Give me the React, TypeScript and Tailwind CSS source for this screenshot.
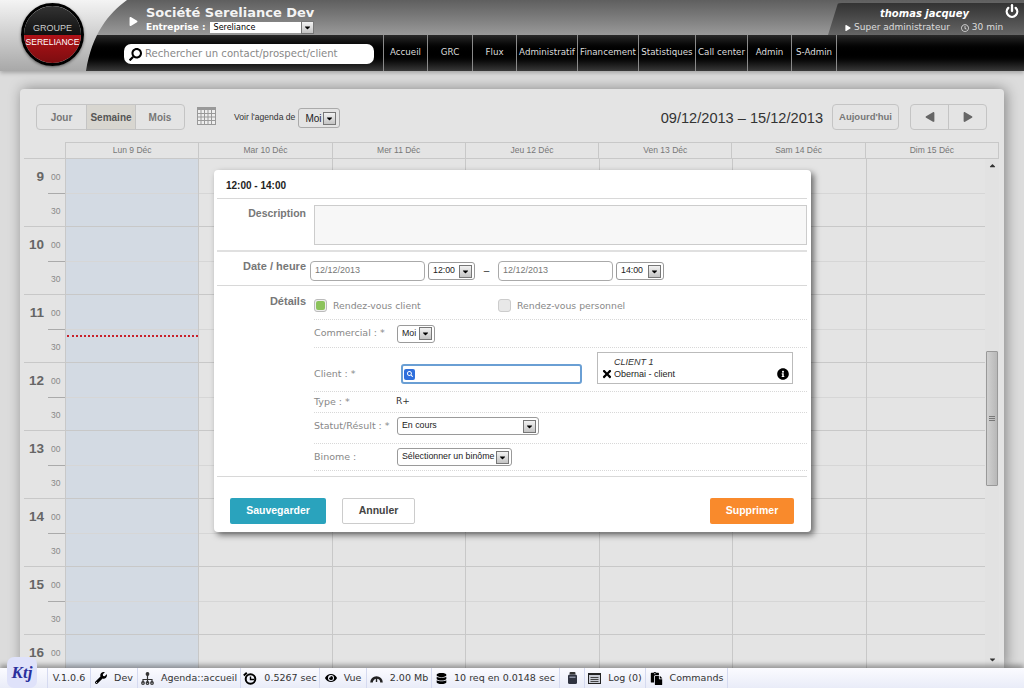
import type { ReactNode } from "react";
import {
  FaCaretDown,
  FaCaretUp,
  FaDatabase,
  FaEye,
  FaInfoCircle,
  FaPaste,
  FaPlay,
  FaSearch,
  FaTimes,
  FaWrench,
  FaRegClock,
} from "react-icons/fa";
import { FiPower } from "react-icons/fi";

const NAV = [
  { label: "Accueil", w: "w-[44px]" },
  { label: "GRC", w: "w-[45px]" },
  { label: "Flux", w: "w-[44px]" },
  { label: "Administratif", w: "w-[61px]" },
  { label: "Financement", w: "w-[61px]" },
  { label: "Statistiques", w: "w-[57px]" },
  { label: "Call center", w: "w-[52px]" },
  { label: "Admin", w: "w-[44px]" },
  { label: "S-Admin", w: "w-[45px]" },
];

const DAYS = ["Lun 9 Déc", "Mar 10 Déc", "Mer 11 Déc", "Jeu 12 Déc", "Ven 13 Déc", "Sam 14 Déc", "Dim 15 Déc"];
const HOURS = [9, 10, 11, 12, 13, 14, 15, 16];

function Arrow({ className = "" }: { className?: string }) {
  return (
    <span className={`flex h-[13px] w-[13px] shrink-0 items-center justify-center border border-[#777] bg-gradient-to-b from-[#f2f2f2] to-[#c4c4c4] text-[9px] text-black ${className}`}>
      <FaCaretDown />
    </span>
  );
}

function Select({ value, w, className = "" }: { value: string; w: string; className?: string }) {
  return (
    <div className={`flex h-[18px] shrink-0 items-center justify-between whitespace-nowrap rounded-[3px] border border-[#9a9a9a] bg-white pl-[4px] pr-[2px] font-['Liberation_Sans',sans-serif] text-[8.8px] text-[#222] ${w} ${className}`}>
      <span>{value}</span>
      <Arrow />
    </div>
  );
}

function Row({ label, children, className = "", labelClass = "" }: { label: string; children: ReactNode; className?: string; labelClass?: string }) {
  return (
    <div className={`flex border-b border-dotted border-[#d8d8d8] ${className}`}>
      <span className={`w-[83px] shrink-0 text-[9.5px] text-[#888] ${labelClass}`}>{label}</span>
      {children}
    </div>
  );
}

function FootItem({ icon, label, w }: { icon?: ReactNode; label?: string; w: string }) {
  return (
    <div className={`flex h-full shrink-0 items-center justify-center gap-[7px] border-r border-[#d5daf0] text-[9.5px] text-[#333] ${w}`}>
      {icon}
      {label && <span>{label}</span>}
    </div>
  );
}

export default function App() {
  return (
    <div className="relative flex h-[688px] w-[1024px] flex-col overflow-hidden bg-[#dcdcdc] font-['DejaVu_Sans',sans-serif]">
      {/* Header */}
      <header className="relative z-20 h-[71px] shrink-0 shadow-[0_2px_4px_rgba(0,0,0,0.25)]">
        <div className="flex h-[35px] bg-gradient-to-b from-[#5f5f5f] to-[#9a9a9a] pl-[129px]">
          <FaPlay className="mt-[17px] text-[9px] text-white" />
          <div className="ml-[8px] pt-[4px] text-white">
            <div className="text-[13px] font-bold leading-[17px] text-[#f4f4f4]">Société Sereliance Dev</div>
            <div className="flex items-center text-[9px] font-bold leading-[12px]">
              <span>Entreprise :</span>
              <div className="ml-[4px] mt-[1px] flex h-[11px] w-[104px] items-center justify-between bg-white pl-[4px] text-[8px] font-normal text-black">
                <span>Sereliance</span>
                <Arrow className="h-[10px] w-[13px]" />
              </div>
            </div>
          </div>
          <div className="ml-auto h-[32px] w-[196px] self-end rounded-tl-[14px] bg-gradient-to-b from-[#333] to-[#666] pl-[17px] text-white [clip-path:polygon(10px_0,100%_0,100%_100%,0_100%)]">
            <div className="relative flex h-[17px] items-end justify-center pr-[20px]">
              <span className="text-[10px] font-bold italic leading-[13px]">thomas jacquey</span>
              <FiPower className="absolute right-[5px] top-[1px] text-[14px]" strokeWidth={4} />
            </div>
            <div className="mt-[1px] flex items-center whitespace-nowrap text-[9px] text-[#ddd]">
              <FaPlay className="mr-[3px] text-[6px] text-white" />
              <span>Super administrateur</span>
              <FaRegClock className="ml-[11px] mr-[3px] text-[8px]" />
              <span>30 min</span>
            </div>
          </div>
        </div>
        <div className="flex h-[36px] items-stretch bg-gradient-to-b from-[#2a2a2a] via-[#000] to-[#3a3a3a] pl-[124px]">
          <div className="mt-[9px] flex h-[20px] w-[250px] items-center rounded-[7px] bg-white pl-[5px] text-[#888]">
            <FaSearch className="mr-[3px] scale-x-[-1] text-[13px] text-black" />
            <span className="text-[10.1px]">Rechercher un contact/prospect/client</span>
          </div>
          <nav className="ml-[9px] flex border-l border-[#8a8a8a]">
            {NAV.map((n) => (
              <div key={n.label} className={`flex items-center justify-center whitespace-nowrap border-r border-[#8a8a8a] text-[8.7px] text-[#ddd] ${n.w}`}>
                {n.label}
              </div>
            ))}
          </nav>
        </div>

        {/* Logo wedge */}
        <svg className="absolute left-0 top-0" width="130" height="72" viewBox="0 0 130 72">
          <defs>
            <linearGradient id="wedge" x1="0" y1="0" x2="0" y2="1">
              <stop offset="0" stopColor="#f4f4f4" />
              <stop offset="1" stopColor="#a8a8a8" />
            </linearGradient>
          </defs>
          <path d="M0 0H127C108 14 92 34 86 71H0Z" fill="url(#wedge)" />
        </svg>
        <div className="absolute left-[21px] top-[3px] flex h-[63px] w-[63px] flex-col overflow-hidden rounded-full border-[3px] border-black text-center font-['Liberation_Sans',sans-serif] shadow-[0_1px_3px_rgba(0,0,0,0.5)]">
          <div className="flex h-[29px] items-end justify-center bg-gradient-to-b from-[#333] to-[#111] text-[9px] leading-[14px] text-[#ccc]">GROUPE</div>
          <div className="flex-1 bg-gradient-to-b from-[#b01218] to-[#7d0d10] text-[8.5px] leading-[14px] text-white">SERELIANCE</div>
        </div>
      </header>

      {/* Agenda panel */}
      <main className="flex min-h-0 flex-1 flex-col px-[20px] pt-[18px]">
        <section className="flex min-h-0 flex-1 flex-col rounded-t-[4px] bg-[#e4e4e4] pl-[4px] pr-[5px] shadow-[2px_0_14px_rgba(0,0,0,0.4)]">
          <div className="flex h-[53px] shrink-0 items-start pl-[12px] pr-[12px] pt-[15px] font-['Liberation_Sans',sans-serif]">
            <div className="flex h-[26px] w-[149px] rounded-[4px] border border-[#c4c4c4] text-[10px] font-bold text-[#777]">
              <span className="flex w-[49px] items-center justify-center">Jour</span>
              <span className="flex w-[50px] items-center justify-center border-x border-[#c4c4c4] bg-[#d8d6d0] text-[#555]">Semaine</span>
              <span className="flex flex-1 items-center justify-center">Mois</span>
            </div>
            <svg className="ml-[12px] mt-[3px]" width="19" height="18" viewBox="0 0 19 18">
              <rect x="0.5" y="0.5" width="18" height="17" fill="#eee" stroke="#999" />
              <rect x="0" y="0" width="19" height="3" fill="#999" />
              <path d="M4 3v15M7.5 3v15M11 3v15M14.5 3v15M0 6.5h19M0 10h19M0 13.5h19" stroke="#999" />
            </svg>
            <span className="ml-[18px] mt-[8px] text-[8.6px] leading-[11px] text-[#333]">Voir l'agenda de</span>
            <div className="ml-[3px] mt-[4px] flex h-[20px] w-[42px] items-center justify-between rounded-[3px] border border-[#aaa] pl-[6px] pr-[3px] text-[10px] text-[#222]">
              <span>Moi</span>
              <Arrow />
            </div>
            <span className="ml-auto mt-[4px] text-[14.6px] leading-[20px] text-[#333]">09/12/2013 – 15/12/2013</span>
            <span className="ml-[9px] flex h-[26px] w-[67px] items-center justify-center rounded-[4px] border border-[#c4c4c4] text-[9.5px] font-bold text-[#777]">Aujourd'hui</span>
            <div className="ml-[11px] flex h-[26px] w-[77px] rounded-[4px] border border-[#c4c4c4] text-[10px] text-[#666]">
              <span className="flex w-[38px] items-center justify-center border-r border-[#c4c4c4]"><FaPlay className="rotate-180" /></span>
              <span className="flex flex-1 items-center justify-center"><FaPlay /></span>
            </div>
          </div>

          {/* Week header */}
          <div className="flex h-[17px] shrink-0 border-b border-[#c8c8c8] font-['Liberation_Sans',sans-serif]">
            <div className="w-[41px] shrink-0" />
            <div className="grid flex-1 grid-cols-7 border-t border-r border-[#c8c8c8]">
              {DAYS.map((d) => (
                <div key={d} className="flex items-center justify-center border-l border-[#c8c8c8] text-[8.5px] text-[#777]">{d}</div>
              ))}
            </div>
          </div>

          {/* Week body */}
          <div className="relative min-h-0 flex-1 overflow-hidden">
            {HOURS.map((h) => (
              <div key={h} className={`flex ${h === 16 ? "h-[34px]" : "h-[68px]"}`}>
                <div className="relative w-[41px] shrink-0 border-b border-[#c8c8c8] font-['Liberation_Sans',sans-serif] text-[#888]">
                  <span className="absolute right-[21px] top-[10px] text-[13.5px] font-bold leading-[16px] text-[#666]">{h}</span>
                  <span className="absolute left-[27px] top-[13px] text-[8.5px] leading-[10px]">00</span>
                  {h !== 16 && (
                    <>
                      <span className="absolute left-[27px] top-[47px] text-[8.5px] leading-[10px]">30</span>
                      <div className="absolute right-0 top-[34px] w-[17px] border-b border-[#aaa]" />
                    </>
                  )}
                </div>
                <div className="grid flex-1 grid-cols-7">
                  {DAYS.map((d, i) => (
                    <div key={d} className={`relative border-b border-l border-[#c8c8c8] ${i === 0 ? "bg-[#d3dae3]" : ""}`}>
                      <div className="h-[35px] border-b border-[#d6d6d6]" />
                      {i === 0 && h === 11 && (
                        <div className="absolute left-[1px] right-0 top-[40px] border-b-[2px] border-dotted border-[#c8202a]" />
                      )}
                    </div>
                  ))}
                </div>
              </div>
            ))}
            {/* Scrollbar */}
            <div className="absolute bottom-0 right-0 top-0 flex w-[14px] flex-col items-center bg-[#e2e2e2] text-[9px] text-[#333]">
              <FaCaretUp className="mt-[2px]" />
              <div className="mt-[181px] flex h-[135px] w-[12px] items-center justify-center rounded-[1px] border border-[#999] bg-gradient-to-r from-[#d0d0d0] to-[#b8b8b8]">
                <div className="h-[5px] w-[6px] border-y border-[#777] bg-[linear-gradient(#777,#777)] bg-[length:100%_1px] bg-center bg-no-repeat" />
              </div>
              <FaCaretDown className="mt-auto mb-[4px]" />
            </div>
          </div>
        </section>
      </main>

      {/* Debug toolbar */}
      <footer className="relative z-20 flex h-[20px] shrink-0 items-center bg-gradient-to-b from-[#fbfbff] to-[#e9ecf8] pl-[48px] shadow-[0_-3px_5px_rgba(0,0,0,0.35)]">
        <div className="h-full w-[1px] -ml-[1px] bg-[#d5daf0]" />
        <FootItem w="w-[43px]" label="V.1.0.6" />
        <FootItem w="w-[47px]" icon={<FaWrench className="text-[12px] text-black" />} label="Dev" />
        <FootItem
          w="w-[103px]"
          icon={
            <svg width="13" height="13" viewBox="0 0 13 13" fill="none" stroke="#333" strokeWidth="1.2">
              <path d="M6.5 3v4M2 11V7.5h9V11M6.5 7.5V11" />
              <circle cx="6.5" cy="2" r="1.3" fill="#333" />
              <circle cx="2" cy="11" r="1.3" />
              <circle cx="6.5" cy="11" r="1.3" />
              <circle cx="11" cy="11" r="1.3" />
            </svg>
          }
          label="Agenda::accueil"
        />
        <FootItem
          w="w-[79px]"
          icon={
            <svg width="14" height="13" viewBox="0 0 14 13" fill="none" stroke="#000" strokeWidth="2">
              <circle cx="7.5" cy="7" r="4.8" />
              <path d="M7.5 4.5V7.5H11" strokeWidth="1.4" />
              <path d="M0.8 3.5L3.8 0.8" />
            </svg>
          }
          label="0.5267 sec"
        />
        <FootItem w="w-[47px]" icon={<FaEye className="text-[12px] text-black" />} label="Vue" />
        <FootItem
          w="w-[65px]"
          icon={
            <svg width="13" height="10" viewBox="0 0 13 10" fill="none" stroke="#222">
              <path d="M1.5 9.5A5 5 0 1 1 11.5 9.5" strokeWidth="2.6" />
              <path d="M6.5 9V4.5" strokeWidth="1.4" />
            </svg>
          }
          label="2.00 Mb"
        />
        <FootItem w="w-[128px]" icon={<FaDatabase className="text-[11px] text-black" />} label="10 req en 0.0148 sec" />
        <FootItem
          w="w-[25px]"
          icon={
            <svg width="9" height="12" viewBox="0 0 9 12">
              <rect x="1.5" y="0" width="6" height="2.5" rx="1" fill="#333" />
              <rect x="0" y="2.5" width="9" height="9.5" rx="1.5" fill="#2f3340" />
              <rect x="1.5" y="4.5" width="6" height="1.5" fill="#8a8fa0" />
            </svg>
          }
        />
        <FootItem
          w="w-[61px]"
          icon={
            <svg width="13" height="11" viewBox="0 0 13 11">
              <rect x="0.5" y="0.5" width="12" height="10" fill="#c8cbd4" stroke="#222" />
              <rect x="0" y="0" width="13" height="2" fill="#222" />
              <path d="M2.5 4.5h8M2.5 6.5h8M2.5 8.5h8" stroke="#444" />
            </svg>
          }
          label="Log (0)"
        />
        <FootItem w="w-[82px]" icon={<FaPaste className="text-[13px] text-black" />} label="Commands" />
      </footer>
      <div className="absolute left-[7px] top-[657px] z-30 flex h-[31px] w-[30px] items-center justify-center rounded-[7px] bg-[#dfe2fa] font-['Liberation_Serif',serif] text-[17px] font-bold italic leading-none text-[#2a2f9c]">
        Ktj
      </div>

      {/* Event dialog */}
      <div className="absolute left-[214px] top-[170px] z-10 w-[597px] rounded-[4px] bg-white pl-[3px] pr-[4px] shadow-[3px_3px_6px_rgba(0,0,0,0.55)]">
        <div className="flex h-[29px] items-center border-b border-[#d8d8d8] pl-[9px] pt-[2px] font-['Liberation_Sans',sans-serif] text-[10px] font-bold text-[#222]">12:00 - 14:00</div>

        <div className="flex h-[53px] border-b-2 border-[#e0e0e0] pt-[6px]">
          <span className="w-[89px] pt-[1px] text-right font-['Liberation_Sans',sans-serif] text-[10.5px] font-bold text-[#777]">Description</span>
          <div className="ml-[8px] h-[40px] flex-1 border border-[#ccc] bg-[#f7f7f7]" />
        </div>

        <div className="flex h-[34px] items-start border-b border-[#d8d8d8] pt-[9px] font-['Liberation_Sans',sans-serif]">
          <span className="-mt-[2px] w-[89px] text-right text-[11px] font-bold leading-[14px] text-[#777]">Date / heure</span>
          <div className="ml-[4px] flex h-[20px] w-[115px] items-center rounded-[4px] border border-[#aaa] pl-[4px] text-[9px] text-[#777]">12/12/2013</div>
          <Select value="12:00" w="w-[47px]" className="ml-[3px] mt-[1px]" />
          <span className="mx-[7px] mt-[2px] w-[9px] text-center text-[10px] text-[#333]">–</span>
          <div className="flex h-[20px] w-[115px] items-center rounded-[4px] border border-[#aaa] pl-[4px] text-[9px] text-[#777]">12/12/2013</div>
          <Select value="14:00" w="w-[48px]" className="ml-[3px] mt-[1px]" />
        </div>

        <div className="flex">
          <span className="w-[89px] pt-[8px] text-right font-['Liberation_Sans',sans-serif] text-[11px] font-bold leading-[14px] text-[#777]">Détails</span>
          <div className="ml-[8px] flex-1">
            <div className="flex h-[34px] items-center border-b border-dotted border-[#d8d8d8] pt-[6px] text-[9.3px] text-[#888]">
              <span className="flex h-[13px] w-[13px] items-center justify-center rounded-[3px] border border-[#bbb] bg-[#eee]">
                <span className="h-[9px] w-[9px] rounded-[2px] bg-[#8cc35c]" />
              </span>
              <span className="ml-[6px] w-[165px]">Rendez-vous client</span>
              <span className="h-[13px] w-[13px] rounded-[3px] border border-[#ccc] bg-[#e8e8e8]" />
              <span className="ml-[6px]">Rendez-vous personnel</span>
            </div>
            <Row label="Commercial : *" className="h-[28px] items-center">
              <Select value="Moi" w="w-[38px]" />
            </Row>
            <Row label="Client : *" className="h-[44px] items-end pb-[7px]" labelClass="mb-[3px]">
              <div className="ml-[4px] flex h-[20px] w-[181px] items-center rounded-[3px] border-2 border-[#6a9fd4] pl-[1px]">
                <span className="flex h-[11px] w-[11px] items-center justify-center rounded-[2px] bg-[#2f6fdc] text-[6px] text-white">
                  <FaSearch />
                </span>
              </div>
              <div className="ml-[15px] h-[32px] w-[196px] border border-[#bbb] pl-[3px] font-['Liberation_Sans',sans-serif] text-[9px] leading-[11px] text-[#222]">
                <div className="mt-[4px] pl-[13px] italic text-[#333]">CLIENT 1</div>
                <div className="flex items-center">
                  <FaTimes className="text-[12px] text-black" />
                  <span className="ml-[1px]">Obernai - client</span>
                  <FaInfoCircle className="ml-auto mr-[3px] text-[12px] text-black" />
                </div>
              </div>
            </Row>
            <Row label="Type : *" className="h-[21px] items-center">
              <span className="-ml-[1px] text-[9px] text-[#333]">R+</span>
            </Row>
            <Row label="Statut/Résult : *" className="h-[31px] items-center pb-[4px]">
              <Select value="En cours" w="w-[142px]" />
            </Row>
            <Row label="Binome :" className="h-[27px] items-center">
              <Select value="Sélectionner un binôme" w="w-[115px]" />
            </Row>
          </div>
        </div>

        <div className="mt-[5px] flex items-start border-t border-[#d8d8d8] pb-[8px] pl-[13px] pr-[13px] pt-[21px] font-['Liberation_Sans',sans-serif] text-[10.5px] font-bold">
          <span className="flex h-[26px] w-[96px] items-center justify-center rounded-[2px] bg-[#2aa3bd] text-white">Sauvegarder</span>
          <span className="ml-[16px] flex h-[26px] w-[73px] items-center justify-center rounded-[2px] border border-[#ccc] text-[#444]">Annuler</span>
          <span className="ml-auto flex h-[26px] w-[84px] items-center justify-center rounded-[2px] bg-[#f98a2c] text-white">Supprimer</span>
        </div>
      </div>
    </div>
  );
}
